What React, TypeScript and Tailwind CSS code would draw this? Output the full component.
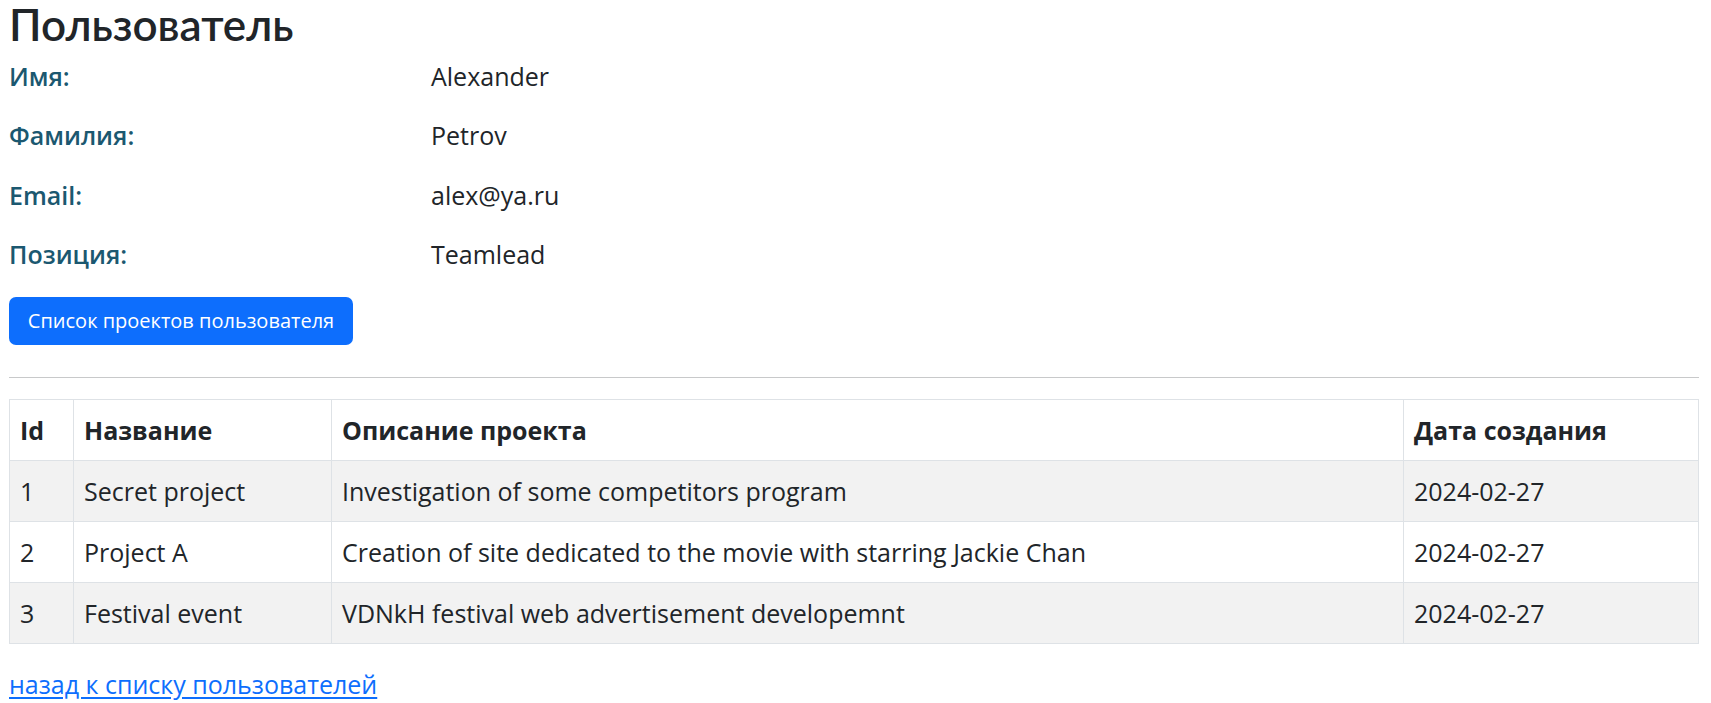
import React from "react";

interface Project {
  id: number;
  name: string;
  description: string;
  createdAt: string;
}

const user = {
  firstName: "Alexander",
  lastName: "Petrov",
  email: "alex@ya.ru",
  position: "Teamlead",
};

const projects: Project[] = [
  { id: 1, name: "Secret project", description: "Investigation of some competitors program", createdAt: "2024-02-27" },
  { id: 2, name: "Project A", description: "Creation of site dedicated to the movie with starring Jackie Chan", createdAt: "2024-02-27" },
  { id: 3, name: "Festival event", description: "VDNkH festival web advertisement developemnt", createdAt: "2024-02-27" },
];

const InfoRow: React.FC<{ label: string; value: string }> = ({ label, value }) => (
  <div className="flex leading-[37.5px]">
    <div className="w-[422px] shrink-0 font-semibold text-[#1b5870]">{label}</div>
    <div>{value}</div>
  </div>
);

const ProjectsTable: React.FC = () => {
  const cell = "border border-[#dee2e6] px-[10px] py-[11px] leading-[38px] text-left align-top";
  return (
    <table className="w-full table-fixed border-collapse">
      <colgroup>
        <col className="w-[64px]" />
        <col className="w-[258px]" />
        <col className="w-[1072px]" />
        <col />
      </colgroup>
      <thead>
        <tr>
          <th className={cell + " font-bold"}>Id</th>
          <th className={cell + " font-bold"}>Название</th>
          <th className={cell + " font-bold"}>Описание проекта</th>
          <th className={cell + " font-bold"}>Дата создания</th>
        </tr>
      </thead>
      <tbody>
        {projects.map((p, i) => (
          <tr key={p.id} className={i % 2 === 0 ? "bg-[#f2f2f2]" : "bg-white"}>
            <td className={cell}>{p.id}</td>
            <td className={cell}>{p.name}</td>
            <td className={cell}>{p.description}</td>
            <td className={cell}>{p.createdAt}</td>
          </tr>
        ))}
      </tbody>
    </table>
  );
};

export default function App() {
  return (
    <div className="min-h-screen bg-white pl-[9px] pr-[12px] font-['Open_Sans',sans-serif] text-[25px] text-[#212529]">
      <h1 className="mt-[2px] font-['Lato','Open_Sans',sans-serif] text-[44px] leading-[44px] font-semibold">
        Пользователь
      </h1>
      <div className="mt-[11.5px] flex flex-col gap-[22px]">
        <InfoRow label="Имя:" value={user.firstName} />
        <InfoRow label="Фамилия:" value={user.lastName} />
        <InfoRow label="Email:" value={user.email} />
        <InfoRow label="Позиция:" value={user.position} />
      </div>
      <button className="mt-[23.5px] flex h-[48px] w-[344px] items-center justify-center rounded-[7px] bg-[#0d6efd] text-[20px] text-white">
        Список проектов пользователя
      </button>
      <hr className="mt-[32px] border-t border-[#c8c9ca]" />
      <div className="mt-[21px]">
        <ProjectsTable />
      </div>
      <a href="#" className="mt-[21.5px] inline-block leading-[37.5px] text-[#0d6efd] underline underline-offset-[3px]">
        назад к списку пользователей
      </a>
    </div>
  );
}
